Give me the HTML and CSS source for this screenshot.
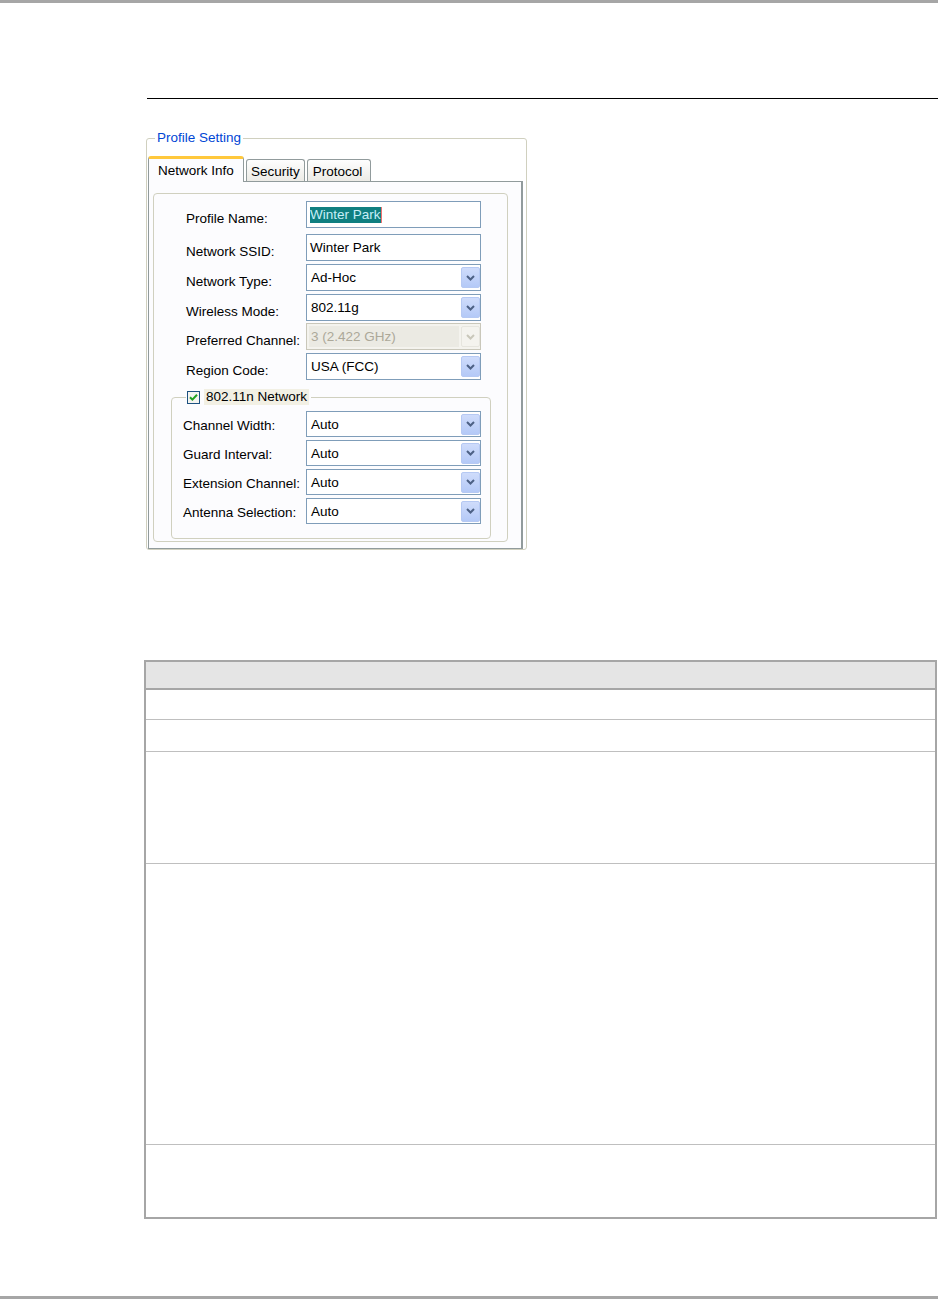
FILE: index.html
```html
<!DOCTYPE html>
<html lang="en">
<head>
    <meta charset="UTF-8">
    <title>Profile Setting - Network Info</title>
    <link rel="stylesheet" href="styles.css">
</head>
<body>
    <div class="page-bar"></div>
    <div class="rule"></div>

    <!-- Profile Setting dialog -->
    <fieldset class="dialog">
        <legend>Profile Setting</legend>

        <div class="tab-strip">
            <div class="tab tab-active">Network Info</div>
            <div class="tab">Security</div>
            <div class="tab tab-protocol">Protocol</div>
        </div>

        <div class="tab-panel">
            <div class="group">
                <div class="form-row">
                    <span class="form-label">Profile Name:</span>
                    <div class="field"><span class="selected-text">Winter Park</span></div>
                </div>
                <div class="form-row row-ssid">
                    <span class="form-label">Network SSID:</span>
                    <div class="field">Winter Park</div>
                </div>
                <div class="form-row">
                    <span class="form-label">Network Type:</span>
                    <div class="combo"><span class="combo-value">Ad-Hoc</span><span class="drop-btn"><svg viewBox="0 0 9 6" width="9" height="6"><polyline points="1,1 4.5,4.5 8,1"/></svg></span></div>
                </div>
                <div class="form-row">
                    <span class="form-label">Wireless Mode:</span>
                    <div class="combo"><span class="combo-value">802.11g</span><span class="drop-btn"><svg viewBox="0 0 9 6" width="9" height="6"><polyline points="1,1 4.5,4.5 8,1"/></svg></span></div>
                </div>
                <div class="form-row row-tight">
                    <span class="form-label">Preferred Channel:</span>
                    <div class="combo combo-disabled"><span class="combo-value">3 (2.422 GHz)</span><span class="drop-btn"><svg viewBox="0 0 9 6" width="9" height="6"><polyline points="1,1 4.5,4.5 8,1"/></svg></span></div>
                </div>
                <div class="form-row">
                    <span class="form-label">Region Code:</span>
                    <div class="combo"><span class="combo-value">USA (FCC)</span><span class="drop-btn"><svg viewBox="0 0 9 6" width="9" height="6"><polyline points="1,1 4.5,4.5 8,1"/></svg></span></div>
                </div>

                <!-- 802.11n sub group -->
                <fieldset class="subgroup">
                    <legend>
                        <svg class="check" viewBox="0 0 13 13" width="13" height="13">
                            <rect x="0.5" y="0.5" width="12" height="12" fill="#f4f4f0" stroke="#1c5180"/>
                            <path d="M3 6.2 L5.4 8.6 L10 3.8" fill="none" stroke="#21a121" stroke-width="2"/>
                        </svg>
                        <span class="check-label">802.11n Network</span>
                    </legend>
                    <div class="form-row sub-row">
                        <span class="form-label">Channel Width:</span>
                        <div class="combo"><span class="combo-value">Auto</span><span class="drop-btn"><svg viewBox="0 0 9 6" width="9" height="6"><polyline points="1,1 4.5,4.5 8,1"/></svg></span></div>
                    </div>
                    <div class="form-row sub-row">
                        <span class="form-label">Guard Interval:</span>
                        <div class="combo"><span class="combo-value">Auto</span><span class="drop-btn"><svg viewBox="0 0 9 6" width="9" height="6"><polyline points="1,1 4.5,4.5 8,1"/></svg></span></div>
                    </div>
                    <div class="form-row sub-row">
                        <span class="form-label">Extension Channel:</span>
                        <div class="combo"><span class="combo-value">Auto</span><span class="drop-btn"><svg viewBox="0 0 9 6" width="9" height="6"><polyline points="1,1 4.5,4.5 8,1"/></svg></span></div>
                    </div>
                    <div class="form-row sub-row">
                        <span class="form-label">Antenna Selection:</span>
                        <div class="combo"><span class="combo-value">Auto</span><span class="drop-btn"><svg viewBox="0 0 9 6" width="9" height="6"><polyline points="1,1 4.5,4.5 8,1"/></svg></span></div>
                    </div>
                </fieldset>
            </div>
        </div>
    </fieldset>

    <!-- Parameter table (cells are blank in the source) -->
    <table class="param-table">
        <tr class="head-row"><th></th></tr>
        <tr class="row-1"><td></td></tr>
        <tr class="row-2"><td></td></tr>
        <tr class="row-3"><td></td></tr>
        <tr class="row-4"><td></td></tr>
        <tr class="row-5"><td></td></tr>
    </table>

    <div class="page-bar bottom-bar"></div>
</body>
</html>
```

FILE: styles.css
```css
/* Page frame */
body {
    margin: 0;
    font-family: "Liberation Sans", Arial, sans-serif;
    font-size: 13.5px;
    color: #000;
    background-color: #fff;
}
.page-bar {
    height: 3px;
    background-color: #a6a6a6;
}
.rule {
    margin: 95px 0 0 147px;
    border-top: 1px solid #000;
}

/* Dialog / group boxes */
.dialog {
    box-sizing: border-box;
    width: 381px;
    margin: 31px 0 0 146px;
    padding: 0 3px 0 1px;
    border: 1px solid #d0d0bf;
    border-radius: 3px;
    min-inline-size: 0;
}
.dialog > legend {
    margin-left: 7px;
    padding: 0 2px;
    line-height: 16px;
    color: #0046d5;
}

.tab-strip {
    display: flex;
    align-items: flex-end;
    height: 26px;
    margin-top: 9px;
    position: relative;
    z-index: 1;
}
.tab {
    box-sizing: border-box;
    height: 22px;
    padding: 3px 4px 0 4px;
    margin-left: 2px;
    border: 1px solid #919b9c;
    border-bottom: none;
    border-radius: 3px 3px 0 0;
    background: linear-gradient(#fefefe, #ecebe6);
    line-height: 17px;
}
.tab-protocol {
    padding: 3px 8px 0 5px;
}
.tab-active {
    height: 26px;
    width: 96px;
    margin-left: 0;
    margin-bottom: -1px;
    padding: 3px 0 0 9px;
    border-top: 3px solid #ffc83c;
    background: #fcfcfe;
}

.tab-panel {
    padding: 11px 13px 6px 4px;
    border: 1px solid #919b9c;
    border-right-width: 2px;
    background-color: #fcfcfe;
}
.group {
    padding: 7px 0 2px 0;
    border: 1px solid #d0d0bf;
    border-radius: 4px;
}

/* Form rows */
.form-row {
    display: flex;
    align-items: center;
    height: 27px;
    margin-top: 3px;
    padding-left: 32px;
}
.form-row:first-child {
    margin-top: 0;
}
.row-ssid {
    margin-top: 6px;
}
.row-tight {
    margin-top: 2px;
}
.form-label {
    width: 120px;
    flex-shrink: 0;
    margin-top: 8px;
    white-space: nowrap;
}
.field,
.combo {
    box-sizing: border-box;
    width: 175px;
    height: 100%;
    border: 1px solid #7f9db9;
    background-color: #fff;
    display: flex;
    align-items: center;
}
.field {
    padding-left: 3px;
}
.selected-text {
    background-color: #0f7f80;
    color: #c6eef8;
    border-right: 1px solid #f07070;
    line-height: 16px;
}
.combo-value {
    flex-grow: 1;
    padding-left: 4px;
}
.drop-btn {
    box-sizing: border-box;
    width: 19px;
    height: 21px;
    display: flex;
    align-items: center;
    justify-content: center;
    border: 1px solid #b6c9f3;
    border-radius: 2px;
    background: linear-gradient(#cfdcfb, #b4c9f7);
}
.drop-btn polyline {
    fill: none;
    stroke: #4d6185;
    stroke-width: 2;
}
.combo-disabled {
    border-color: #c9c7ba;
    background-color: #f4f3ee;
    color: #aca899;
}
.combo-disabled .combo-value {
    align-self: stretch;
    display: flex;
    align-items: center;
    margin: 2px;
    padding-left: 2px;
    background-color: #ebeae3;
}
.combo-disabled .drop-btn {
    background: #f4f3ee;
    border-color: #e6e5de;
}
.combo-disabled .drop-btn polyline {
    stroke: #c9c7ba;
}

/* 802.11n sub group */
.subgroup {
    margin: 9px 16px 0 17px;
    padding: 3px 0 14px 11px;
    border: 1px solid #d0d0bf;
    border-radius: 4px;
    min-inline-size: 0;
}
.subgroup > legend {
    display: flex;
    align-items: center;
    margin-left: 3px;
    padding: 0 2px 0 1px;
    height: 16px;
}
.check {
    display: block;
    margin-right: 4px;
}
.check-label {
    background-color: #f2f0e4;
    padding: 0 2px;
    line-height: 16px;
}
.sub-row {
    height: 26px;
    padding-left: 0;
}
.sub-row .form-label {
    width: 123px;
    margin-top: 2px;
}

/* Parameter table */
.param-table {
    width: 793px;
    margin: 110px 0 0 144px;
    border-collapse: collapse;
    border: 2px solid #a6a6a6;
}
.param-table th,
.param-table td {
    padding: 0;
    border-top: 1px solid #bfbfbf;
}
.head-row th {
    height: 26px;
    background-color: #e5e5e5;
    border-bottom: 2px solid #a6a6a6;
}
.row-1 td { height: 29px; border-top: none; }
.row-2 td { height: 31px; }
.row-3 td { height: 111px; }
.row-4 td { height: 280px; }
.row-5 td { height: 72px; }

.bottom-bar {
    margin-top: 77px;
}
```
